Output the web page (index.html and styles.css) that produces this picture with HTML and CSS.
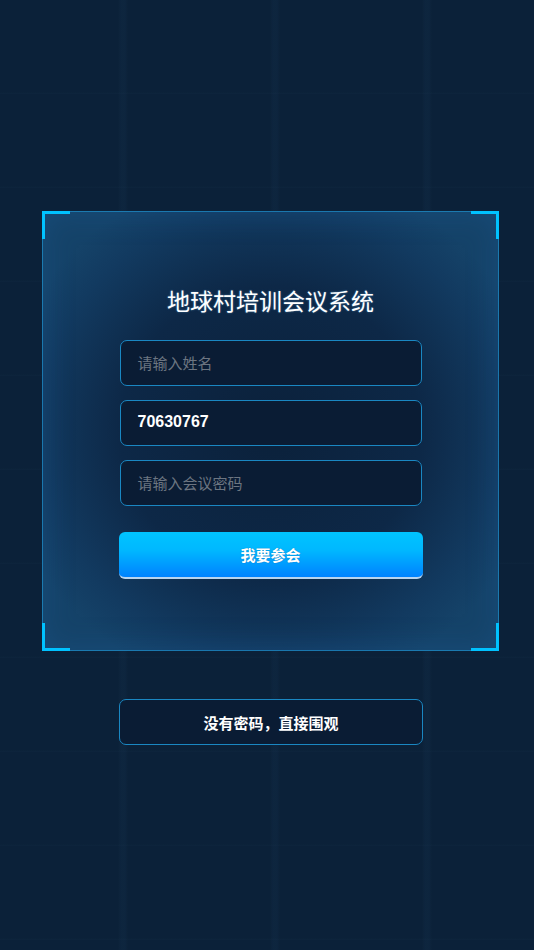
FILE: index.html
```html
<!DOCTYPE html>
<html lang="zh">
<head>
<meta charset="utf-8">
<title>地球村培训会议系统</title>
<link rel="stylesheet" href="styles.css">
</head>
<body>
<div class="page">
  <div class="panel">
    <span class="corner tl"></span>
    <span class="corner tr"></span>
    <span class="corner bl"></span>
    <span class="corner br"></span>
    <h1 class="title">地球村培训会议系统</h1>
    <div class="form">
      <div class="field placeholder">请输入姓名</div>
      <div class="field value">70630767</div>
      <div class="field placeholder">请输入会议密码</div>
      <div class="btn-primary">我要参会</div>
    </div>
  </div>
  <div class="btn-ghost">没有密码，直接围观</div>
</div>
</body>
</html>
```
FILE: styles.css
```css
html, body {
  margin: 0;
  padding: 0;
}
body {
  width: 534px;
  height: 950px;
  overflow: hidden;
  font-family: "Liberation Sans", "Noto Sans CJK SC", sans-serif;
  background-color: #0b2139;
  background-image:
    linear-gradient(90deg, transparent 0, transparent 118px, rgba(50,90,130,0.07) 121px, rgba(50,90,130,0.07) 125px, transparent 128px, transparent 152px),
    linear-gradient(180deg, transparent 0, transparent 92px, rgba(50,90,130,0.08) 95px, rgba(50,90,130,0.08) 99px, transparent 102px, transparent 94px);
  background-size: 152px 950px, 534px 94px;
  background-repeat: repeat-x, repeat-y;
}
.page {
  padding-top: 211px;
  display: flex;
  flex-direction: column;
  align-items: flex-start;
}
.panel {
  position: relative;
  margin-left: 42px;
  width: 457px;
  height: 440px;
  box-sizing: border-box;
  border: 1px solid rgba(30, 140, 200, 0.75);
  background: radial-gradient(ellipse 60% 60% at 50% 50%, #0b213b 0%, #0d2847 55%, #123a60 85%, #154369 100%);
  box-shadow: inset 0 0 30px rgba(28, 95, 155, 0.35);
  padding-top: 72px;
  display: flex;
  flex-direction: column;
  align-items: center;
}
.corner {
  position: absolute;
  width: 25px;
  height: 25px;
  border-color: #00c2ff;
  border-style: solid;
  border-width: 0;
}
.corner.tl { top: -1px; left: -1px; border-top-width: 3px; border-left-width: 3px; }
.corner.tr { top: -1px; right: -1px; border-top-width: 3px; border-right-width: 3px; }
.corner.bl { bottom: -1px; left: -1px; border-bottom-width: 3px; border-left-width: 3px; }
.corner.br { bottom: -1px; right: -1px; border-bottom-width: 3px; border-right-width: 3px; }
.title {
  margin: 0;
  font-family: "Noto Sans CJK SC", sans-serif;
  font-weight: 400;
  font-size: 23px;
  line-height: 32px;
  color: #ffffff;
  text-shadow: 0 0 2px rgba(120, 200, 255, 0.5);
}
.form {
  margin-top: 24px;
  width: 304px;
  display: flex;
  flex-direction: column;
  align-items: center;
}
.field {
  width: 302px;
  height: 46px;
  box-sizing: border-box;
  border: 1px solid #1a87c2;
  border-radius: 7px;
  background: #0a1c34;
  padding-left: 17px;
  padding-bottom: 2px;
  display: flex;
  align-items: center;
  font-size: 15px;
  margin-bottom: 14px;
}
.field.placeholder {
  color: #6c7581;
}
.field.value {
  color: #ffffff;
  font-weight: 700;
  font-size: 16px;
}
.btn-primary {
  margin-top: 12px;
  width: 304px;
  height: 47px;
  box-sizing: border-box;
  border-radius: 6px;
  background: linear-gradient(180deg, #00c4ff 0%, #00b8ff 40%, #0082ff 100%);
  border-bottom: 2px solid #b8d4f0;
  display: flex;
  align-items: center;
  justify-content: center;
  color: #ffffff;
  font-weight: 700;
  font-size: 15px;
  text-shadow: 0 0 1px rgba(0, 60, 120, 0.6);
}
.btn-ghost {
  margin-top: 48px;
  margin-left: 119px;
  width: 304px;
  height: 46px;
  box-sizing: border-box;
  border: 1px solid #1a87c2;
  border-radius: 7px;
  background: #0a1c34;
  display: flex;
  align-items: center;
  justify-content: center;
  color: #ffffff;
  font-weight: 700;
  font-size: 15px;
}
```
